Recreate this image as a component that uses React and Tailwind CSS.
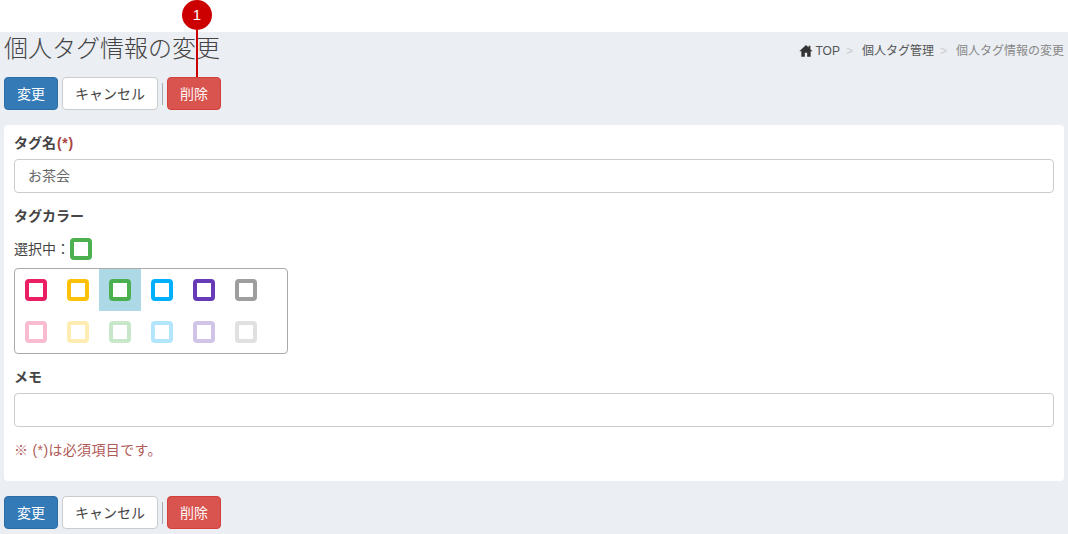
function Buttons() {
  return (
    <div className="flex items-center h-[33px]">
      <button className="w-[54px] h-[33px] rounded border border-[#2e6da4] bg-[#337ab7] text-white text-sm">変更</button>
      <button className="ml-1 w-[96px] h-[33px] rounded border border-[#ccc] bg-white text-[#444] text-sm">キャンセル</button>
      <span className="ml-1 w-px h-[22px] bg-[#aaa]"></span>
      <button className="ml-1 w-[54px] h-[33px] rounded border border-[#d43f3a] bg-[#d9534f] text-[#fff5f5] text-sm">削除</button>
    </div>
  );
}

function Swatch({ color }) {
  return <span className="block w-[22px] h-[22px] rounded-[4px] border-[4px] bg-white" style={{ borderColor: color }}></span>;
}

const strong = ["#e91e63", "#ffc107", "#4caf50", "#00b0ff", "#673ab7", "#9e9e9e"];
const light = ["#f8bbd0", "#ffecb3", "#c8e6c9", "#b3e5fc", "#d1c4e9", "#e0e0e0"];

export default function App() {
  return (
    <div className="relative w-[1068px] h-[534px] overflow-hidden bg-white text-sm text-[#333] font-['Liberation_Sans','Noto_Sans_CJK_JP',sans-serif]">
      <div className="absolute left-[182px] top-0 w-[30px] h-[30px] rounded-full bg-[#cc0000] text-white text-[15px] flex items-center justify-center z-10">1</div>
      <div className="absolute left-[196px] top-[30px] w-[2px] h-[47px] bg-[#cc0000] z-10"></div>

      <div className="h-[32px]"></div>
      <div className="h-[502px] bg-[#ebeef3] px-1">
        <div className="flex items-start justify-between h-[45px]">
          <h1 className="text-2xl font-light leading-[34px] text-[#444]">個人タグ情報の変更</h1>
          <div className="flex items-center mt-[10px] text-xs leading-[18px]">
            <svg viewBox="0 0 24 24" className="w-[14px] h-[14px] fill-[#333] mr-[2px] -ml-px"><path d="M12 1.5 0.5 12.5h3.5V22h6v-7h4v7h6v-9.5h3.5L19.5 9V3h-3v3z" /></svg>
            <span className="text-[#555]">TOP</span>
            <span className="mx-[6px] text-[#ccc]">&gt;</span>
            <span className="text-[#555] ml-[3px]">個人タグ管理</span>
            <span className="mx-[6px] text-[#ccc]">&gt;</span>
            <span className="text-[#888] ml-[3px]">個人タグ情報の変更</span>
          </div>
        </div>
        <Buttons />
        <div className="mt-[15px] h-[356px] rounded bg-white px-[10px] pt-[8px]">
          <div className="font-bold text-sm leading-[20px] text-[#444]">タグ名<span className="text-[#a94442] tracking-[0.7px] ml-px">(*)</span></div>
          <input readOnly value="お茶会" className="mt-[6px] block w-full h-[34px] rounded border border-[#ccc] bg-white px-[13px] pb-[2px] text-sm text-[#666]" />
          <div className="mt-[13px] font-bold text-sm leading-[20px] text-[#444]">タグカラー</div>
          <div className="mt-[12px] flex items-center h-[22px] text-sm text-[#444]"><span>選択中：</span><Swatch color="#4caf50" /></div>
          <div className="mt-[8px] w-[274px] h-[86px] rounded border border-[#aaa] flex flex-col">
            {[strong, light].map((row, r) => (
              <div key={r} className="flex h-[42px]">
                {row.map((c, i) => (
                  <div key={i} className={`w-[42px] h-[42px] flex items-center justify-center ${r === 0 && i === 2 ? "bg-[#add8e6]" : ""}`}>
                    <Swatch color={c} />
                  </div>
                ))}
              </div>
            ))}
          </div>
          <div className="mt-[13px] font-bold text-sm leading-[20px] text-[#444]">メモ</div>
          <input readOnly className="mt-[6px] block w-full h-[34px] rounded border border-[#ccc] bg-white px-3" />
          <div className="mt-[13px] text-sm leading-[20px] tracking-[0.35px] text-[#b05a58]">※ (*)は必須項目です。</div>
        </div>
        <div className="mt-[15px]"><Buttons /></div>
      </div>
    </div>
  );
}
